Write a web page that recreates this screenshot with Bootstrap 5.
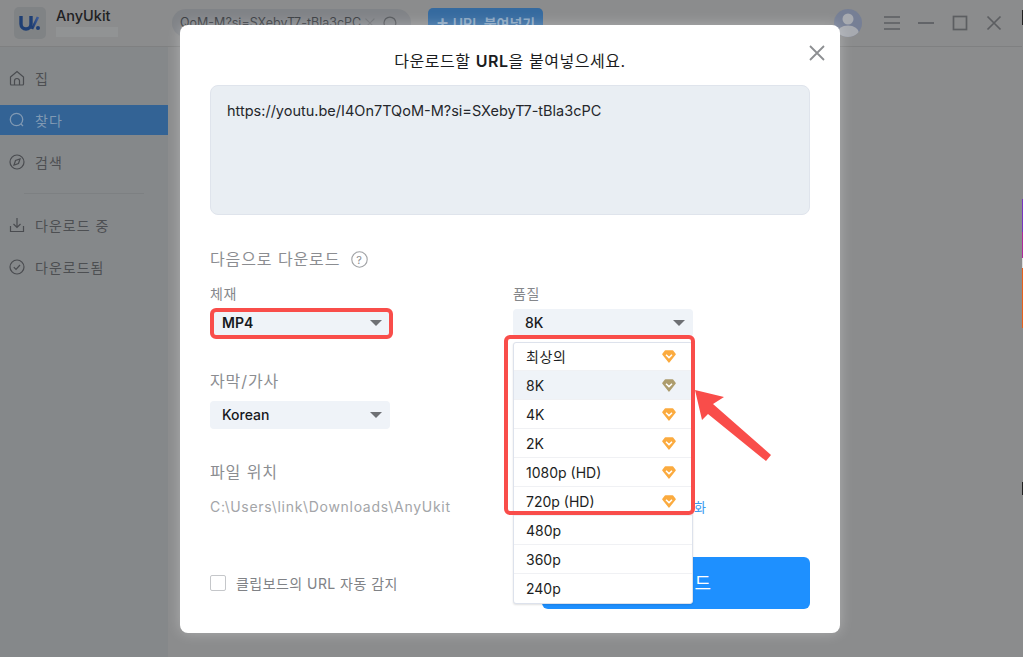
<!doctype html>
<html lang="ko">
<head>
<meta charset="utf-8">
<title>AnyUkit</title>
<link rel="stylesheet" href="https://cdn.jsdelivr.net/npm/bootstrap@5.3.0/dist/css/bootstrap.min.css">
<style>
html,body{height:100%;overflow:hidden}
body{font-family:Inter,"Noto Sans CJK KR",sans-serif;background:#8b8c8d;color:#16181c;font-size:14px}
.app-shell{width:1023px;height:657px;position:relative;overflow:hidden}
.top-strip{height:47px;border-bottom:1px solid #7f8081;padding:8px 0 0 14px}
.logo-tile{width:32px;height:32px;border-radius:5px;background:#808385;margin-top:-1px}
.brand-name{font-size:14.5px;line-height:18px;color:#1f2123;margin-top:-1px}
.brand-blur{width:62px;height:10px;background:#919394;margin-top:2px}
.brand-box{margin-left:10px;width:116px}
.search-pill{width:239px;height:28px;margin-top:1px;border-radius:14px;background:#808387;color:#3a3d42;font-size:12.5px;padding:0 13px 0 8px;white-space:nowrap}
.url-btn{width:115px;height:30px;background:#356a9f;border-radius:5px;color:#8aa5c0;margin-left:17px;font-size:14px;font-weight:600;border:0;padding:0;white-space:nowrap}
.win-group{margin-left:auto;padding-right:21px;gap:18px;margin-top:1px}
.side-col{width:168px;height:610px;background:#85888a;padding-top:16px;font-size:14px;letter-spacing:1px}
.side-item{height:30px;margin-bottom:12px;padding-left:9px;gap:10px;color:#4d4f52}
.side-item.current{background:#336395;color:#8099b3}
.side-rule{height:1px;background:#7d8082;margin:16px 24px 16px}
.dialog-box{position:absolute;left:180px;top:25px;width:660px;height:608px;background:#fff;border-radius:8px;box-shadow:0 0 14px rgba(255,255,255,.3);padding:24px 30px 0}
.dialog-x{position:absolute;right:15px;top:20px;background:none;border:0;padding:0;line-height:0}
.dialog-title{font-size:16px;line-height:24px;letter-spacing:.55px;text-align:center;color:#1a1c20}
.url-area{height:130px;margin-top:12px;background:#e9eef3;border:1px solid #dfe4ec;border-radius:8px;padding:14px 16px;font-size:14.5px;line-height:22px;color:#25272b}
.sec-label{font-size:16px;line-height:22px;color:#8b8d91;letter-spacing:.9px}
.mini-label{font-size:14px;line-height:18px;color:#85878b;letter-spacing:.5px}
.pick-box{width:180px;height:28px;background:#eff3f8;border-radius:4px;padding:0 8px 0 12px;font-size:14px;line-height:28px;font-weight:500;color:#17191d;margin-top:6px}
.caret-mark{width:0;height:0;border:6px solid transparent;border-top:6px solid #6e7074;border-bottom:0}
.head-gap{margin-top:33px}
.q-mark{margin-left:11px}
.form-cols{margin-top:15px}
.col-a{width:303px}
.col-b{width:180px}
.subs-gap{margin-top:33px;margin-bottom:9px}
.file-gap{margin-top:32px}
.path-line{width:496px;font-size:14px;color:#a3a5a8;line-height:20px;margin-top:14px;letter-spacing:.7px}
.path-change{color:#3a9bf0;font-size:13px;letter-spacing:0}
.foot-line{position:absolute;left:30px;right:30px;bottom:24px}
.check-square{width:16px;height:16px;border:1px solid #c5c7ca;border-radius:2px;background:#fff}
.check-text{font-size:14px;color:#808286;margin-left:10px;letter-spacing:.45px}
.go-btn{width:268px;height:52px;background:#1e90ff;border:0;border-radius:6px;color:#fff;font-size:18px;letter-spacing:2px;margin-left:auto}
.opt-menu{position:absolute;left:513px;top:342px;width:180px;height:262px;background:#fff;border:1px solid #dde2ec;border-radius:3px;box-shadow:0 1px 2px rgba(0,0,0,.12)}
.opt-row{height:29px;padding:0 16px 0 12px;border-bottom:1px solid #f0f1f4;font-size:14px;color:#1c1e22}
.opt-row:first-child{height:28px;letter-spacing:.6px}
.opt-row:last-child{border-bottom:0}
.opt-row.chosen{background:#eff3f8}
.red-ring{position:absolute;border:4px solid #f94d4a;pointer-events:none}
.ring-a{left:210px;top:308px;width:183px;height:31px;border-radius:6px}
.ring-b{left:504px;top:335px;width:191px;height:180px;border-radius:6px}
.red-arrow{position:absolute;left:690px;top:385px}
.edge-line{position:absolute;right:0;top:0;width:1px;height:657px;background:linear-gradient(#8b8c8d 10px,#222 10px,#222 25px,#8b8c8d 25px,#8b8c8d 199px,#7a35c0 199px,#7a35c0 232px,#b02a9c 232px,#b02a9c 258px,#ddd 258px,#ddd 268px,#e8601c 268px,#e8601c 328px,#8b8c8d 328px,#8b8c8d 482px,#222 482px,#222 495px,#8b8c8d 495px)}
</style>
</head>
<body>
<div class="app-shell">
  <header class="top-strip d-flex align-items-start">
    <div class="logo-tile d-flex align-items-center justify-content-center flex-shrink-0">
      <svg width="22" height="16" viewBox="0 0 22 16"><defs><linearGradient id="lg" x1="0" x2="1"><stop offset="0" stop-color="#1c3a6e"/><stop offset="1" stop-color="#3c5c9a"/></linearGradient></defs><path d="M2 1v8a5 5 0 0 0 10 0V1" fill="none" stroke="#1f3f74" stroke-width="3.4"/><path d="M13 14L19 2" stroke="url(#lg)" stroke-width="2.6" fill="none"/><circle cx="19" cy="13" r="2" fill="#1f3f74"/></svg>
    </div>
    <div class="brand-box flex-shrink-0">
      <div class="brand-name fw-medium">AnyUkit</div>
      <div class="brand-blur"></div>
    </div>
    <div class="search-pill d-flex align-items-center flex-shrink-0">
      <span>QoM-M?si=SXebyT7-tBla3cPC</span>
      <svg class="ms-1" width="10" height="10" viewBox="0 0 10 10"><path d="M.5.500l9 9M9.500.500l-9 9" stroke="#6d7074" stroke-width="1.100"/></svg>
      <svg class="ms-2" width="15" height="15" viewBox="0 0 15 15"><circle cx="7" cy="7" r="6" fill="none" stroke="#55585c" stroke-width="1.300"/><path d="M11.500 11.500l2.500 2.500" stroke="#55585c" stroke-width="1.300"/></svg>
    </div>
    <button class="url-btn flex-shrink-0"><span class="fs-5 lh-1">+</span> URL 붙여넣기</button>
    <div class="win-group d-flex align-items-center flex-shrink-0">
      <svg class="me-1" width="28" height="28" viewBox="0 0 28 28"><defs><clipPath id="av"><circle cx="14" cy="14" r="14"/></clipPath></defs><circle cx="14" cy="14" r="14" fill="#767f95"/><g clip-path="url(#av)"><circle cx="14" cy="10" r="5.500" fill="#a7aab0"/><ellipse cx="14" cy="24" rx="11" ry="7.500" fill="#a7aab0"/></g></svg>
      <svg width="16" height="14" viewBox="0 0 16 14"><path d="M0 1h16M0 7h16M0 13h16" stroke="#5c5e61" stroke-width="1.700"/></svg>
      <svg width="16" height="14" viewBox="0 0 16 14"><path d="M0 7h16" stroke="#5c5e61" stroke-width="1.700"/></svg>
      <svg width="16" height="16" viewBox="0 0 16 16"><rect x="1.500" y="1.500" width="13" height="13" fill="none" stroke="#5c5e61" stroke-width="1.700"/></svg>
      <svg width="16" height="16" viewBox="0 0 16 16"><path d="M1.500 1.500l13 13M14.500 1.500l-13 13" stroke="#5c5e61" stroke-width="1.700"/></svg>
    </div>
  </header>
  <nav class="side-col">
    <div class="side-item d-flex align-items-center"><svg width="16" height="16" viewBox="0 0 16 16" fill="none" stroke="#4a4c50" stroke-width="1.200"><path d="M1.500 7L8 1.500 14.500 7v7a1 1 0 0 1-1 1h-11a1 1 0 0 1-1-1z"/><path d="M5.500 15v-4a2.500 2.500 0 0 1 5 0v4"/></svg><span>집</span></div>
    <div class="side-item current d-flex align-items-center"><svg width="16" height="16" viewBox="0 0 16 16" fill="none" stroke="#8099b3" stroke-width="1.300"><circle cx="7.500" cy="7.500" r="6.200"/><path d="M12 12l2 2"/></svg><span>찾다</span></div>
    <div class="side-item d-flex align-items-center"><svg width="16" height="16" viewBox="0 0 16 16" fill="none" stroke="#4a4c50" stroke-width="1.200"><circle cx="8" cy="8" r="7"/><path d="M11 5L9.500 9.500 5 11l1.500-4.500z"/></svg><span>검색</span></div>
    <div class="side-rule"></div>
    <div class="side-item d-flex align-items-center"><svg width="16" height="16" viewBox="0 0 16 16" fill="none" stroke="#4a4c50" stroke-width="1.200"><path d="M8 1v9M4.500 7L8 10.500 11.500 7"/><path d="M1.500 9v5.500h13V9"/></svg><span>다운로드 중</span></div>
    <div class="side-item d-flex align-items-center"><svg width="16" height="16" viewBox="0 0 16 16" fill="none" stroke="#4a4c50" stroke-width="1.200"><circle cx="8" cy="8" r="7"/><path d="M4.800 8.200l2.200 2.200 4-4.400"/></svg><span>다운로드됨</span></div>
  </nav>

  <section class="dialog-box">
    <button class="dialog-x" aria-label="닫기"><svg width="16" height="16" viewBox="0 0 16 16"><path d="M1 1l14 14M15 1L1 15" stroke="#8d8f92" stroke-width="1.800"/></svg></button>
    <div class="dialog-title">다운로드할 <b class="fw-semibold">URL</b>을 붙여넣으세요.</div>
    <div class="url-area">https://youtu.be/I4On7TQoM-M?si=SXebyT7-tBla3cPC</div>
    <div class="sec-label head-gap d-flex align-items-center">다음으로 다운로드
      <svg class="q-mark" width="17" height="17" viewBox="0 0 17 17"><circle cx="8.500" cy="8.500" r="7.700" fill="none" stroke="#a0a2a5" stroke-width="1.100"/><text x="8.500" y="12.500" text-anchor="middle" font-size="11" fill="#8b8d90" font-family="Inter">?</text></svg>
    </div>
    <div class="form-cols d-flex">
      <div class="col-a">
        <div class="mini-label">체재</div>
        <div class="pick-box d-flex align-items-center justify-content-between fw-semibold">MP4<i class="caret-mark"></i></div>
        <div class="sec-label subs-gap">자막/가사</div>
        <div class="pick-box d-flex align-items-center justify-content-between">Korean<i class="caret-mark"></i></div>
      </div>
      <div class="col-b">
        <div class="mini-label">품질</div>
        <div class="pick-box d-flex align-items-center justify-content-between">8K<i class="caret-mark"></i></div>
      </div>
    </div>
    <div class="sec-label file-gap">파일 위치</div>
    <div class="path-line d-flex justify-content-between"><span>C:\Users\link\Downloads\AnyUkit</span><span class="path-change">위치 변화</span></div>
    <div class="foot-line d-flex align-items-center">
      <span class="check-square"></span><span class="check-text">클립보드의 URL 자동 감지</span>
      <button class="go-btn">다운로드</button>
    </div>
  </section>

  <div class="opt-menu">
    <div class="opt-row d-flex align-items-center justify-content-between"><span>최상의</span><svg width="14" height="13" viewBox="0 0 14 13"><path d="M3.500 1h7L13 4.300 7 11.800 1 4.300z" fill="#fbab3f" stroke="#fbab3f" stroke-width="1.600" stroke-linejoin="round"/><path d="M4 4.800l3 2.800 3-2.800" fill="none" stroke="#fff" stroke-width="1.500"/></svg></div>
    <div class="opt-row chosen d-flex align-items-center justify-content-between"><span>8K</span><svg width="14" height="13" viewBox="0 0 14 13"><path d="M3.500 1h7L13 4.300 7 11.800 1 4.300z" fill="#ad9c6d" stroke="#ad9c6d" stroke-width="1.600" stroke-linejoin="round"/><path d="M4 4.800l3 2.800 3-2.800" fill="none" stroke="#fff" stroke-width="1.500"/></svg></div>
    <div class="opt-row d-flex align-items-center justify-content-between"><span>4K</span><svg width="14" height="13" viewBox="0 0 14 13"><path d="M3.500 1h7L13 4.300 7 11.800 1 4.300z" fill="#fbab3f" stroke="#fbab3f" stroke-width="1.600" stroke-linejoin="round"/><path d="M4 4.800l3 2.800 3-2.800" fill="none" stroke="#fff" stroke-width="1.500"/></svg></div>
    <div class="opt-row d-flex align-items-center justify-content-between"><span>2K</span><svg width="14" height="13" viewBox="0 0 14 13"><path d="M3.500 1h7L13 4.300 7 11.800 1 4.300z" fill="#fbab3f" stroke="#fbab3f" stroke-width="1.600" stroke-linejoin="round"/><path d="M4 4.800l3 2.800 3-2.800" fill="none" stroke="#fff" stroke-width="1.500"/></svg></div>
    <div class="opt-row d-flex align-items-center justify-content-between"><span>1080p (HD)</span><svg width="14" height="13" viewBox="0 0 14 13"><path d="M3.500 1h7L13 4.300 7 11.800 1 4.300z" fill="#fbab3f" stroke="#fbab3f" stroke-width="1.600" stroke-linejoin="round"/><path d="M4 4.800l3 2.800 3-2.800" fill="none" stroke="#fff" stroke-width="1.500"/></svg></div>
    <div class="opt-row d-flex align-items-center justify-content-between"><span>720p (HD)</span><svg width="14" height="13" viewBox="0 0 14 13"><path d="M3.500 1h7L13 4.300 7 11.800 1 4.300z" fill="#fbab3f" stroke="#fbab3f" stroke-width="1.600" stroke-linejoin="round"/><path d="M4 4.800l3 2.800 3-2.800" fill="none" stroke="#fff" stroke-width="1.500"/></svg></div>
    <div class="opt-row d-flex align-items-center"><span>480p</span></div>
    <div class="opt-row d-flex align-items-center"><span>360p</span></div>
    <div class="opt-row d-flex align-items-center"><span>240p</span></div>
  </div>

  <div class="red-ring ring-a"></div>
  <div class="red-ring ring-b"></div>
  <svg class="red-arrow" width="85" height="80" viewBox="690 385 85 80"><path d="M695 390L724 397 713 404 771 455 766 461 708 414 702 420z" fill="#f94d4a"/></svg>
  <div class="edge-line"></div>
</div>
<script src="https://cdn.jsdelivr.net/npm/bootstrap@5.3.0/dist/js/bootstrap.bundle.min.js"></script>
</body>
</html>
